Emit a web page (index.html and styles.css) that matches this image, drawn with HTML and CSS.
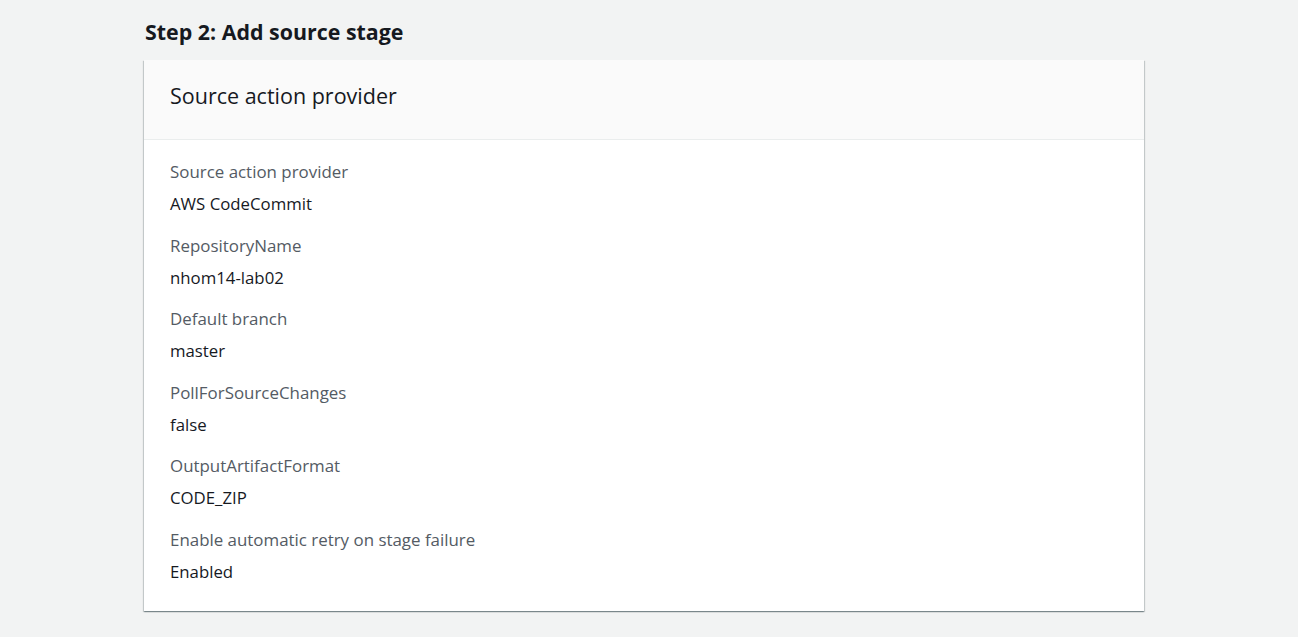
FILE: index.html
```html
<!DOCTYPE html>
<html lang="en">
<head>
<meta charset="utf-8">
<title>Step 2: Add source stage</title>
<link rel="stylesheet" href="styles.css">
</head>
<body>
<main class="page">
  <h2 class="step-title">Step 2: Add source stage</h2>
  <section class="card">
    <header class="card-header">
      <h3 class="card-title">Source action provider</h3>
    </header>
    <dl class="card-body">
      <div class="field">
        <dt class="label">Source action provider</dt>
        <dd class="value">AWS CodeCommit</dd>
      </div>
      <div class="field">
        <dt class="label">RepositoryName</dt>
        <dd class="value">nhom14-lab02</dd>
      </div>
      <div class="field">
        <dt class="label">Default branch</dt>
        <dd class="value">master</dd>
      </div>
      <div class="field">
        <dt class="label">PollForSourceChanges</dt>
        <dd class="value">false</dd>
      </div>
      <div class="field">
        <dt class="label">OutputArtifactFormat</dt>
        <dd class="value">CODE_ZIP</dd>
      </div>
      <div class="field">
        <dt class="label">Enable automatic retry on stage failure</dt>
        <dd class="value">Enabled</dd>
      </div>
    </dl>
  </section>
</main>
</body>
</html>
```
FILE: styles.css
```css
html, body {
  margin: 0;
  padding: 0;
  background: #f2f3f3;
}

body {
  font-family: "Open Sans", "Noto Sans", sans-serif;
  color: #16191f;
  height: 637px;
  overflow: hidden;
}

.page {
  width: 1000px;
  margin-left: 144px;
  padding-top: 17px;
}

.step-title {
  margin: 0 0 14px 1px;
  font-size: 21.4px;
  line-height: 29px;
  font-weight: 700;
  color: #16191f;
}

.card {
  background: #ffffff;
  box-shadow: 0 1px 1px 0 rgba(0, 28, 36, 0.3),
              1px 1px 1px 0 rgba(0, 28, 36, 0.15),
              -1px 1px 1px 0 rgba(0, 28, 36, 0.15);
}

.card-header {
  background: #fafafa;
  border-bottom: 1px solid #eaeded;
  height: 80px;
  box-sizing: border-box;
  padding: 0 26px 8px;
  display: flex;
  align-items: center;
}

.card-title {
  margin: 0;
  font-size: 21.5px;
  line-height: 30px;
  font-weight: 400;
  color: #16191f;
}

.card-body {
  margin: 0;
  padding: 21px 26px 28px;
  display: flex;
  flex-direction: column;
  gap: 19.6px;
}

.field {
  display: flex;
  flex-direction: column;
  gap: 10px;
}

.label {
  font-size: 16.9px;
  line-height: 22px;
  color: #545b64;
}

.value {
  margin: 0;
  font-size: 16.8px;
  line-height: 22px;
  color: #16191f;
}
```
